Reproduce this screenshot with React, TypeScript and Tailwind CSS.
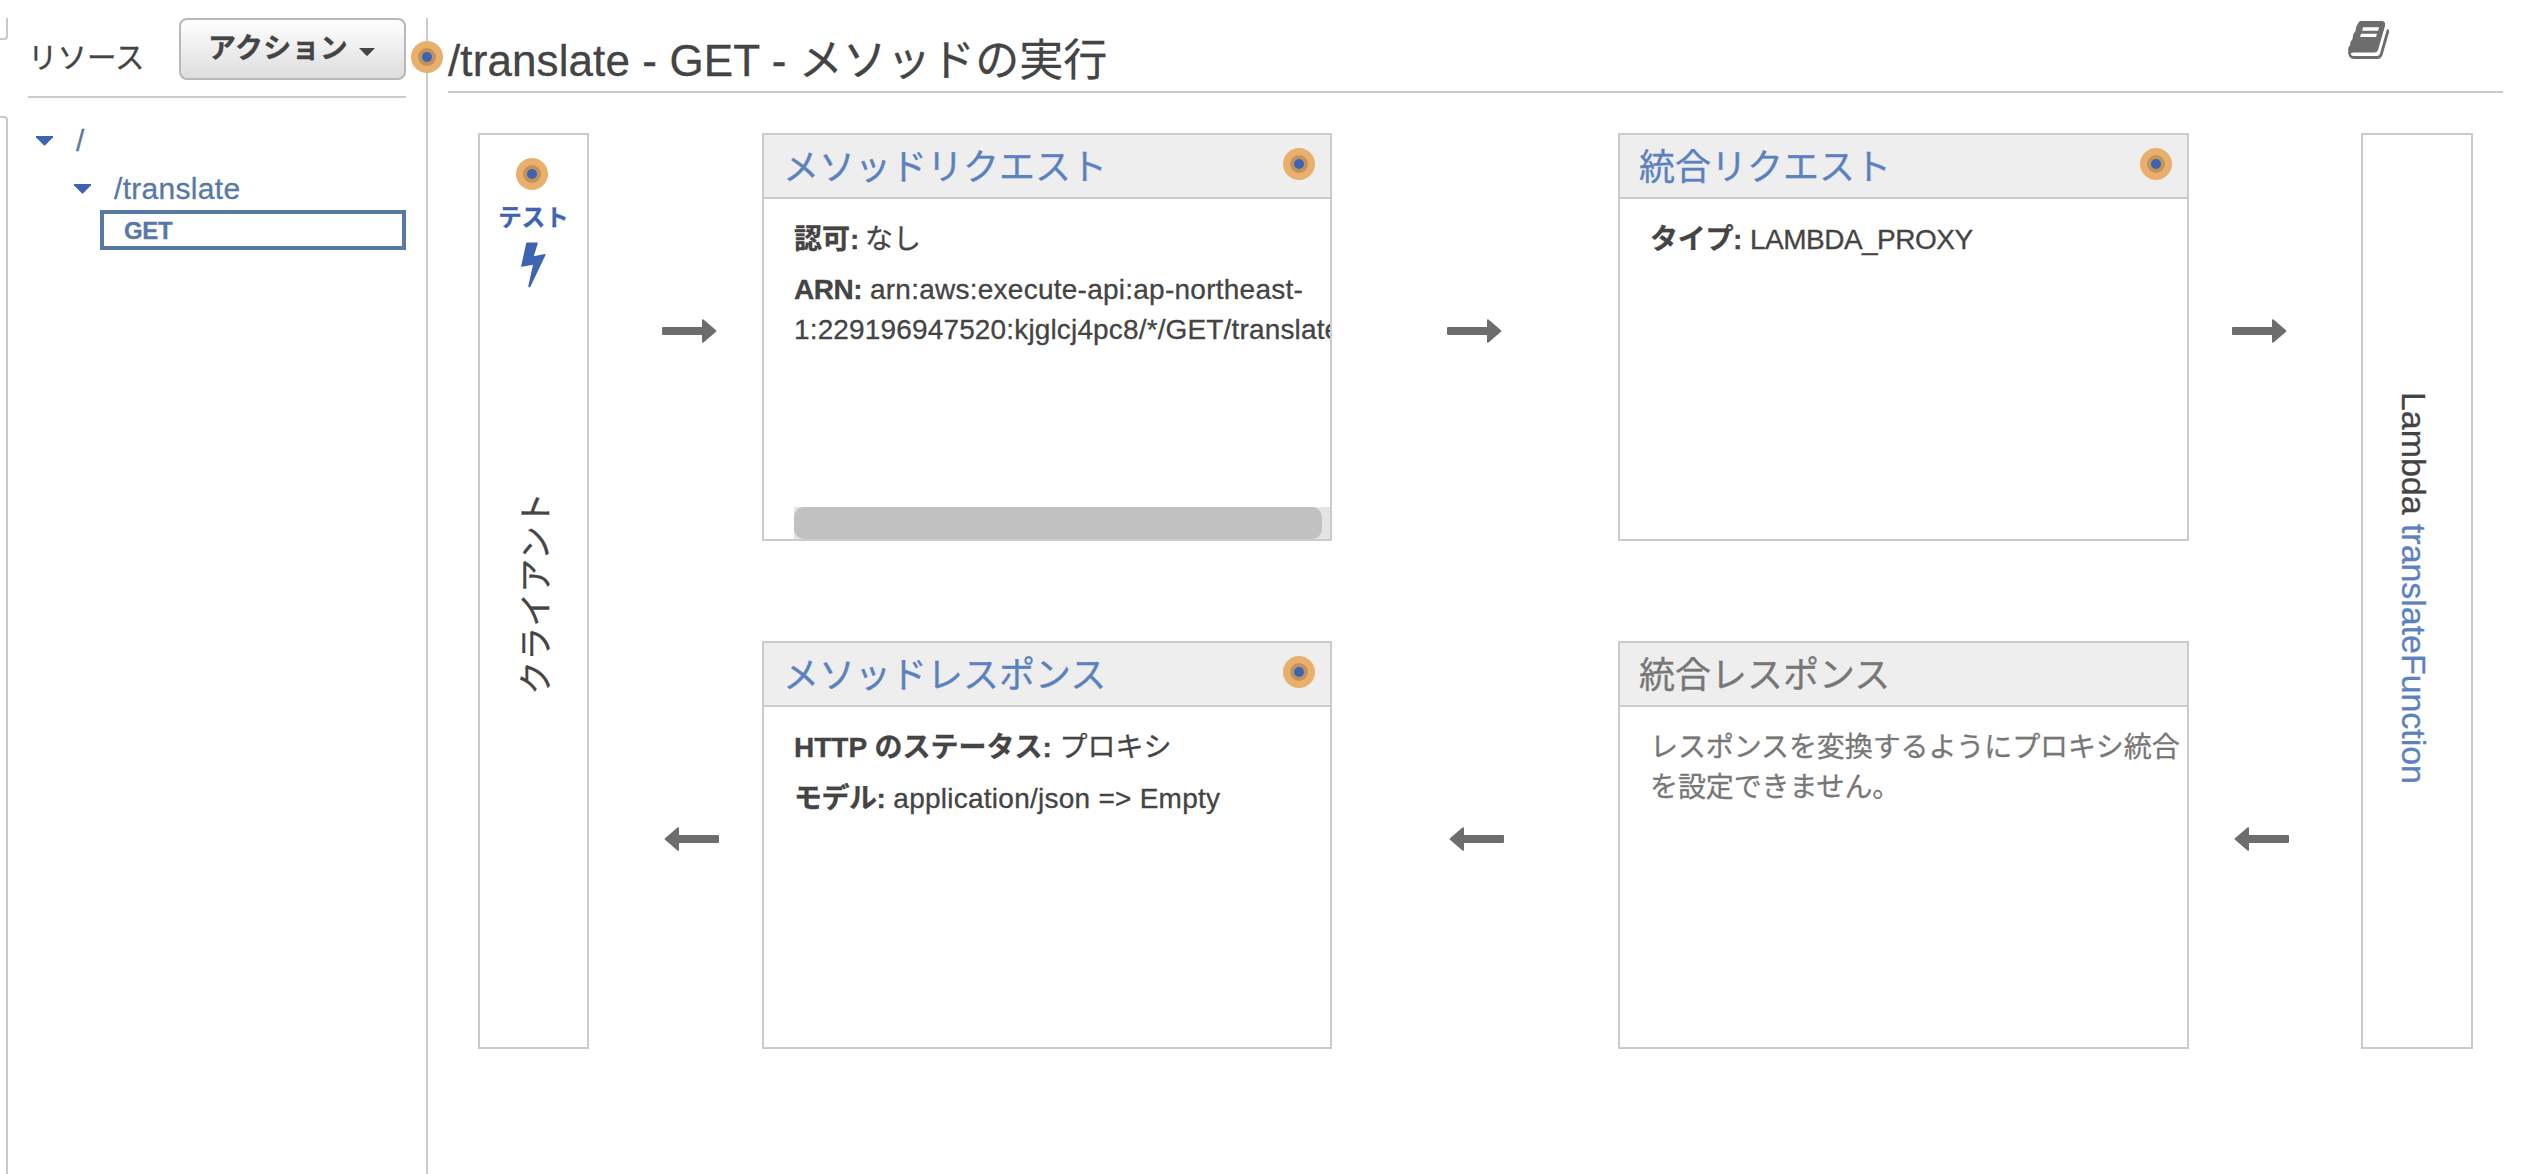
import type { ReactNode } from "react";

function Bullet() {
  return (
    <span className="flex size-8 shrink-0 items-center justify-center rounded-full bg-[#e9af6c]">
      <span className="flex size-[18px] items-center justify-center rounded-full bg-[#c2925e]">
        <span className="size-[10px] rounded-full bg-[#3c64b1]" />
      </span>
    </span>
  );
}

function Arrow({ left = false }: { left?: boolean }) {
  return (
    <svg width="55" height="24" viewBox="0 0 55 24" className={left ? "rotate-180" : ""}>
      <path
        d="M1 8H40V1Q40 0 41.5 0.5L54 11.2Q55 12 54 12.8L41.5 23.5Q40 24 40 23V16H1Q0 16 0 15V9Q0 8 1 8Z"
        fill="#6d6d6d"
      />
    </svg>
  );
}

function Caret({ className }: { className: string }) {
  return (
    <svg width="17" height="10" viewBox="0 0 17 10" className={className}>
      <path d="M0 0H17V1.2L9 9.6H8L0 1.2Z" fill="currentColor" />
    </svg>
  );
}

function Bolt() {
  return (
    <svg width="25" height="46" viewBox="0 0 25 46">
      <path
        d="M6 0.5H16.3Q17 0.5 16.8 1.3L12.8 14.2L23.6 12Q25 11.9 24.4 13.3L9.5 44.4Q9 45.5 8 45.3Q7.1 45 7.3 44L12 22.8L1 24.8Q0 24.9 0.2 23.8L5.2 1.2Q5.4 0.5 6 0.5Z"
        fill="#3c64b1"
      />
    </svg>
  );
}

function Book() {
  return (
    <svg width="42" height="39" viewBox="0 0 42 39" className="block">
      <path
        d="M13 0H34Q38 0.5 37 5L30 29Q29 31.500 26.500 31.500H5Q2.500 31.500 3 33.500Q3.500 35 6 35H29Q31 35 32 32.500L38.500 9.500Q39.500 7.500 41 9L41 11.500L34.500 34Q33 38 29.500 38H6Q0.500 37.500 0.200 32V27L1 25.500L2 24.500L2.500 21L4.500 18L5.300 13L7.500 10L8.300 5.500L10.300 2Q11 0 13 0ZM15 6.300L14.300 9.800H30L31 6.300ZM13 12.800L12 16H28L29 12.800Z"
        fill="#6d6d6d"
        fillRule="evenodd"
      />
    </svg>
  );
}

function Card({
  title,
  muted = false,
  children,
}: {
  title: string;
  muted?: boolean;
  children: ReactNode;
}) {
  return (
    <section className="flex h-[408px] flex-col border-2 border-[#cbcbcb]">
      <header className="flex h-[64px] shrink-0 items-start justify-between border-b-2 border-[#cbcbcb] bg-[#eeeeee] pr-[15px] pl-[19px]">
        <h2
          className={
            muted
              ? "text-[36px] leading-[65px] text-[#777777]"
              : "text-[36px] leading-[65px] text-[#5b82bf]"
          }
        >
          {title}
        </h2>
        {!muted && (
          <span className="mt-[13px]">
            <Bullet />
          </span>
        )}
      </header>
      <div className="flex min-h-0 flex-1 flex-col gap-[11px] overflow-hidden pt-[21px] pl-[30px] text-[28px] leading-[40px]">
        {children}
      </div>
    </section>
  );
}

function ArrowColumn() {
  return (
    <div className="flex h-[916px] w-[57px] flex-col pt-[186px]">
      <Arrow />
      <div className="mt-[484px] pl-[2px]">
        <Arrow left />
      </div>
    </div>
  );
}

export default function App() {
  return (
    <div className="flex h-[1174px] w-[2542px] overflow-hidden bg-white pt-[18px] font-['Liberation_Sans','Noto_Sans_CJK_JP',sans-serif] text-[#444444] [-webkit-text-stroke:0.3px]">
      <div className="flex w-2 flex-col gap-[76px]">
        <div className="h-[22px] rounded-br-[4px] border-r-2 border-b-2 border-[#cbcbcb]" />
        <div className="flex-1 rounded-tr-[4px] border-t-2 border-r-2 border-[#cbcbcb]" />
      </div>

      <aside className="ml-5 w-[378px]">
        <div className="flex h-[80px] items-start justify-between border-b-2 border-[#cbcbcb]">
          <h1 className="mt-[20px] text-[29.5px] leading-[40px]">リソース</h1>
          <button className="flex h-[62px] w-[227px] items-start rounded-lg border-2 border-[#b8b8b8] bg-linear-to-b from-white to-[#dddddd] pl-[27px] text-[28px] font-bold">
            <span className="mt-[9px] leading-[40px] tracking-[0.3px]">アクション</span>
            <svg width="16" height="8" viewBox="0 0 16 8" className="mt-7 ml-[11px]">
              <path d="M0 0H16L8.500 7.800H7.500Z" fill="#444444" />
            </svg>
          </button>
        </div>
        <ul className="text-[30px] leading-[50px] tracking-[0.3px] text-[#5879a5]">
          <li className="mt-[18px] flex h-12 items-start pl-2">
            <Caret className="mt-5 text-[#3c64b1]" />
            <span className="ml-[23px]">/</span>
          </li>
          <li className="flex h-12 items-start pl-[46px]">
            <Caret className="mt-5 text-[#3c64b1]" />
            <span className="ml-[23px]">/translate</span>
          </li>
          <li className="mt-[-2px] ml-[72px] flex h-10 items-center border-4 border-[#5879a5] pt-0.5 pl-5 text-[24px] font-bold tracking-[-0.3px]">
            GET
          </li>
        </ul>
      </aside>

      <div className="relative ml-5 w-[2px] bg-[#cbcbcb]">
        <div className="absolute top-[23px] left-[-15px]">
          <Bullet />
        </div>
      </div>

      <main className="ml-5 w-[2055px]">
        <header className="flex h-[75px] items-start justify-between border-b-2 border-[#cbcbcb]">
          <h1 className="mt-[11px] text-[44px] leading-[64px] tracking-[0.1px]">
            /translate - GET - メソッドの実行
          </h1>
          <span className="mt-[3px] mr-[113px]">
            <Book />
          </span>
        </header>

        <div className="mt-10 ml-[30px] flex">
          <div className="flex h-[916px] w-[111px] flex-col items-center border-2 border-[#cbcbcb] pt-[23px]">
            <div className="flex flex-col items-center pr-[3px]">
              <Bullet />
            </div>
            <span className="mt-3 text-[23.5px] leading-8 font-bold text-[#3c64b1]">テスト</span>
            <span className="mt-2 block h-[46px]">
              <Bolt />
            </span>
            <span className="mt-[204px] ml-[5px] rotate-180 text-[34px] leading-[40px] [writing-mode:vertical-rl] [text-orientation:sideways]">
              クライアント
            </span>
          </div>

          <div className="ml-[73px]">
            <ArrowColumn />
          </div>

          <div className="ml-[43px] flex w-[570px] flex-col gap-[100px]">
            <Card title="メソッドリクエスト">
              <p>
                <b>認可:</b> <span className="-ml-0.5">なし</span>
              </p>
              <p className="-mt-px tracking-[0.15px] whitespace-nowrap">
                <b className="tracking-[-0.5px]">ARN:</b>{" "}
                <span className="tracking-[0.25px]">arn:aws:execute-api:ap-northeast-</span>
                <br />
                1:229196947520:kjglcj4pc8/*/GET/translate
              </p>
              <div className="mt-auto h-8 bg-[#e4e4e4]">
                <div className="h-8 w-[528px] rounded-[10px] bg-[#c1c1c1]" />
              </div>
            </Card>
            <Card title="メソッドレスポンス">
              <p>
                <b>HTTP のステータス:</b> プロキシ
              </p>
              <p className="tracking-[0.25px]">
                <b className="tracking-[-0.5px]">モデル:</b> application/json =&gt; Empty
              </p>
            </Card>
          </div>

          <div className="ml-[115px]">
            <ArrowColumn />
          </div>

          <div className="ml-[114px] flex w-[571px] flex-col gap-[100px]">
            <Card title="統合リクエスト">
              <p>
                <b className="tracking-[-0.3px]">タイプ:</b>{" "}
                <span className="tracking-[-0.5px]">LAMBDA_PROXY</span>
              </p>
            </Card>
            <Card title="統合レスポンス" muted>
              <p className="tracking-[-0.1px] text-[#777777]">
                レスポンスを変換するようにプロキシ統合
                <br />
                を設定できません。
              </p>
            </Card>
          </div>

          <div className="ml-[43px]">
            <ArrowColumn />
          </div>

          <div className="ml-[72px] flex h-[916px] w-[112px] shrink-0 items-center justify-center border-2 border-[#cbcbcb] pr-[6px] pb-[6px]">
            <span className="text-[34px] leading-[40px] tracking-[-0.05px] whitespace-nowrap [writing-mode:vertical-rl]">
              Lambda <span className="text-[#5b82bf]">translateFunction</span>
            </span>
          </div>
        </div>
      </main>
    </div>
  );
}
